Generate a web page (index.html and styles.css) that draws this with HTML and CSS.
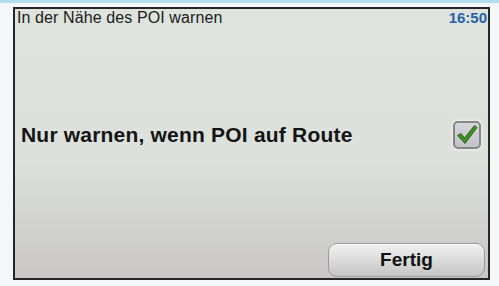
FILE: index.html
```html
<!DOCTYPE html>
<html lang="de">
<head>
<meta charset="utf-8">
<link rel="stylesheet" href="styles.css">
</head>
<body>
<div class="screen">
  <div class="panel">
    <div class="header">
      <span class="title">In der Nähe des POI warnen</span>
      <span class="time">16:50</span>
    </div>
    <div class="option">
      <span class="label">Nur warnen, wenn POI auf Route</span>
      <span class="checkbox">
        <svg width="24" height="24" viewBox="0 0 24 24">
          <path d="M2.5 12.5 L6 10.5 L9.5 15 L19.5 2.5 L22 4.5 L10 20.5 Z" fill="#3f8d24" stroke="#2c6a17" stroke-width="1" stroke-linejoin="round"/>
        </svg>
      </span>
    </div>
    <div class="footer">
      <button class="done">Fertig</button>
    </div>
  </div>
</div>
</body>
</html>
```
FILE: styles.css
```css
html, body {
  margin: 0;
  padding: 0;
}
body {
  width: 499px;
  height: 286px;
  background: #f4f6f7;
  font-family: "Liberation Sans", Arial, sans-serif;
  overflow: hidden;
}
.screen {
  box-sizing: border-box;
  width: 499px;
  height: 286px;
  border-top: 3px solid #b3dcee;
  padding: 4px 9px 6px 13px;
}
.panel {
  box-sizing: border-box;
  height: 273px;
  border: 2px solid #262626;
  background: linear-gradient(#dfe3de 0%, #dde1dc 55%, #c8c6c6 100%);
  display: flex;
  flex-direction: column;
}
.header {
  display: flex;
  justify-content: space-between;
  align-items: baseline;
  height: 18px;
  padding: 0 1px 0 2px;
  line-height: 18px;
}
.title {
  font-size: 16px;
  letter-spacing: 0.1px;
  color: #1b1b1b;
}
.time {
  font-size: 15px;
  font-weight: bold;
  color: #2561a8;
}
.option {
  flex: 1;
  display: flex;
  align-items: center;
  justify-content: space-between;
  padding: 0 7px 0 6px;
}
.label {
  font-size: 21px;
  font-weight: bold;
  letter-spacing: 0.2px;
  color: #141414;
  line-height: 24px;
}
.checkbox {
  box-sizing: border-box;
  width: 28px;
  height: 28px;
  border: 2px solid #868684;
  border-radius: 5px;
  background: linear-gradient(#d6d5dc, #c3c2ca);
  box-shadow: 0 0 2px 1px #f0f0ee;
  display: flex;
  align-items: center;
  justify-content: center;
}
.footer {
  display: flex;
  justify-content: flex-end;
  padding: 0 3px 1px 0;
}
.done {
  width: 157px;
  height: 34px;
  border: 1px solid #9a9a9a;
  border-radius: 9px;
  background: linear-gradient(#f0f0f0 0%, #dedede 45%, #c4c4c4 100%);
  box-shadow: inset 0 1px 0 #ffffff;
  font-family: "Liberation Sans", Arial, sans-serif;
  font-size: 19px;
  font-weight: bold;
  color: #111;
  padding: 0;
}
```
